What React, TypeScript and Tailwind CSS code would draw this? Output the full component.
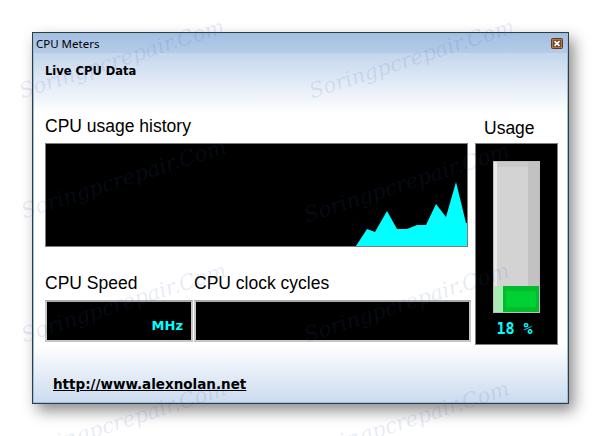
import React from "react";

const historyPoints =
  "310,102 321,85 329,88 341,67 351,85 361,85 371,81 380,81 390,60 400,73 410,38 420,79 421,79 421,102";

const marks = [
  { left: "left-[15px]", top: "top-[48px]" },
  { left: "left-[305px]", top: "top-[48px]" },
  { left: "left-[17px]", top: "top-[168px]" },
  { left: "left-[300px]", top: "top-[172px]" },
  { left: "left-[17px]", top: "top-[292px]" },
  { left: "left-[300px]", top: "top-[292px]" },
  { left: "left-[17px]", top: "top-[410px]" },
  { left: "left-[300px]", top: "top-[410px]" },
];

function CloseButton() {
  return (
    <svg width="12" height="11" viewBox="0 0 12 11">
      <rect x="0.5" y="0.5" width="11" height="10" rx="1" fill="#b9743f" stroke="#5b3a22" />
      <rect x="2" y="2" width="8" height="7" fill="#6b4a33" />
      <path d="M3.5 3.2 L8.5 7.8 M8.5 3.2 L3.5 7.8" stroke="#ffffff" strokeWidth="1.6" />
    </svg>
  );
}

function UsageBar() {
  return (
    <div className="w-[47px] h-[152px] border border-[#bdbdbd] flex flex-col">
      <div className="flex-1 flex">
        <div className="w-[3px] bg-[#e9e9e9]" />
        <div className="flex-1 bg-[#d3d3d3] border-t-[5px] border-[#cacaca]" />
        <div className="w-[11px] bg-[#c2c2c2]" />
      </div>
      <div className="h-[26px] flex">
        <div className="w-[9px] bg-[#a9ebb2]" />
        <div className="flex-1 bg-[#00bd2e] px-[3px] py-[5px]">
          <div className="h-full bg-[#00d132]" />
        </div>
      </div>
    </div>
  );
}

export default function App() {
  return (
    <div className="relative w-[601px] h-[436px] bg-white pt-[32px] pl-[32px] overflow-hidden">
      <div className="w-[537px] h-[372px] border border-[#3a3a3a] shadow-[5px_7px_14px_rgba(0,0,0,0.45)]">
        <div className="h-full border border-[#8fc3ea] flex flex-col">
          {/* Title bar */}
          <div className="h-[19px] flex items-center justify-between bg-[linear-gradient(to_bottom,#a3bfe1,#b5cce8)] pl-[2px] pr-[4px]">
            <span className="font-['Noto_Sans',sans-serif] text-[11.5px] leading-[19px] text-black">
              CPU Meters
            </span>
            <CloseButton />
          </div>

          {/* Body */}
          <div className="flex-1 flex flex-col pl-[11px] bg-[linear-gradient(to_bottom,#c4d6ec_0px,#ffffff_60px,#ffffff_292px,#cbdbee_100%)]">
            <div className="pt-[10px] font-['DejaVu_Sans',sans-serif] font-bold text-[11.5px] leading-[16px] text-black">
              Live CPU Data
            </div>

            <div className="mt-[37px] flex items-start gap-[4px] font-['Liberation_Sans',Arial,sans-serif] text-black">
              <div className="w-[426px] flex flex-col">
                <div className="text-[17.5px] leading-[20px] mb-[7px]">CPU usage history</div>
                <div className="w-[423px] h-[104px] border border-[#7d7d7d] bg-black">
                  <svg width="421" height="102" viewBox="0 0 421 102" className="block">
                    <polygon points={historyPoints} fill="#00ffff" />
                  </svg>
                </div>
                <div className="mt-[26px] flex text-[17.5px] leading-[20px]">
                  <div className="w-[149px]">CPU Speed</div>
                  <div>CPU clock cycles</div>
                </div>
                <div className="mt-[7px] flex gap-[1px]">
                  <div className="w-[148px] h-[42px] border-2 border-[#c6c6c6] border-t-[#a9a9a9] bg-black flex items-end justify-end pr-[8px] pb-[7px]">
                    <span className="font-['DejaVu_Sans',sans-serif] font-bold text-[13px] leading-[14px] text-[#00ffff]">
                      MHz
                    </span>
                  </div>
                  <div className="w-[277px] h-[42px] border-2 border-[#c6c6c6] border-t-[#a9a9a9] bg-black" />
                </div>
              </div>

              <div className="w-[83px] flex flex-col pt-[2px]">
                <div className="ml-[9px] text-[17.5px] leading-[20px] mb-[5px]">Usage</div>
                <div className="w-[83px] h-[202px] border border-[#808080] bg-black flex flex-col items-center pt-[17px]">
                  <UsageBar />
                  <div className="mt-[8px] ml-[-4px] font-['DejaVu_Sans_Mono',monospace] font-semibold text-[15px] leading-[16px] text-[#00ffff]">
                    18 %
                  </div>
                </div>
              </div>
            </div>

            <div className="mt-[31px] ml-[8px] font-['DejaVu_Sans',sans-serif] font-bold text-[13.5px] leading-[16px] text-black underline">
              http://www.alexnolan.net
            </div>
          </div>
        </div>
      </div>

      {marks.map((m, i) => (
        <div
          key={i}
          className={`pointer-events-none absolute ${m.left} ${m.top} w-[200px] text-center -rotate-[18deg] font-['DejaVu_Serif',serif] italic text-[21px] leading-[26px] text-[rgba(60,90,170,0.13)]`}
        >
          Soringpcrepair.Com
        </div>
      ))}
    </div>
  );
}
